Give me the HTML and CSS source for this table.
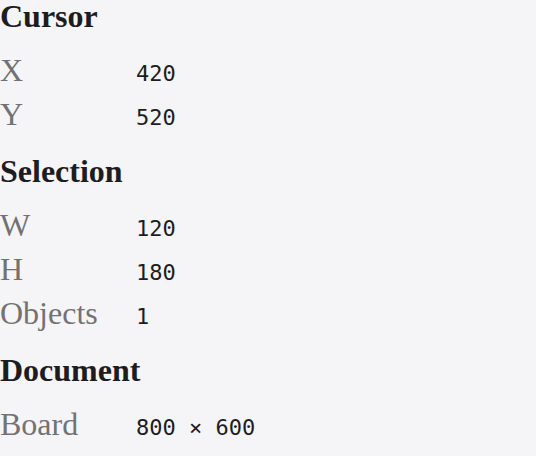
FILE: index.html
```html
<!DOCTYPE html>
<html>
<head>
<meta charset="utf-8">
<link rel="stylesheet" href="styles.css">
</head>
<body>
<section class="group">
  <h2 class="title">Cursor</h2>
  <dl class="props">
    <dt class="label">X</dt><dd class="value">420</dd>
    <dt class="label">Y</dt><dd class="value">520</dd>
  </dl>
</section>
<section class="group">
  <h2 class="title">Selection</h2>
  <dl class="props">
    <dt class="label">W</dt><dd class="value">120</dd>
    <dt class="label">H</dt><dd class="value">180</dd>
    <dt class="label">Objects</dt><dd class="value">1</dd>
  </dl>
</section>
<section class="group">
  <h2 class="title">Document</h2>
  <dl class="props">
    <dt class="label">Board</dt><dd class="value">800 × 600</dd>
    <dt class="label">Units</dt><dd class="value">px</dd>
  </dl>
</section>
</body>
</html>
```

FILE: styles.css
```css
html, body {
  margin: 0;
  padding: 0;
  background: #f5f5f7;
}
body {
  font-family: "Liberation Serif", "Times New Roman", serif;
  color: #1d1d1f;
}
.group {
  display: flex;
  flex-direction: column;
  gap: 16px;
  margin-bottom: 19px;
}
.title {
  margin: 0;
  font-size: 32px;
  line-height: 32px;
  font-weight: 700;
}
.props {
  margin: 0;
  display: grid;
  grid-template-columns: 136px 1fr;
  align-items: baseline;
}
.label {
  font-size: 32px;
  line-height: 44px;
  color: #727274;
}
.value {
  margin: 0;
  font-family: "DejaVu Sans Mono", monospace;
  font-size: 22px;
  line-height: 26px;
  color: #1d1d1f;
}
```
